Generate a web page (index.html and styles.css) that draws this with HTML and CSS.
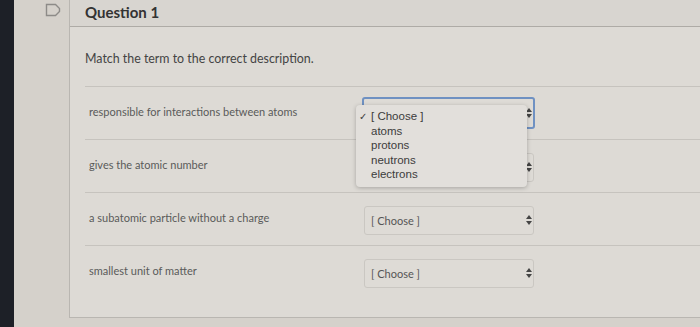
FILE: index.html
```html
<!DOCTYPE html>
<html lang="en">
<head>
    <meta charset="UTF-8">
    <title>Question 1</title>
    <link rel="stylesheet" href="styles.css">
</head>
<body>
    <div class="screen-edge"></div>
    <div class="gutter">
        <svg class="flag" width="16" height="14" viewBox="0 0 16 14">
            <path d="M1.5 1.5 H10.5 L14.5 5.5 V8.5 L10.5 12.5 H1.5 Z" fill="none" stroke="#8d8b88" stroke-width="1.4"/>
        </svg>
    </div>
    <div class="question">
        <div class="question-header">Question 1</div>
        <div class="question-body">
            <p class="question-text">Match the term to the correct description.</p>
            <div class="answers">
                <div class="answer-row">
                    <div class="answer-label">responsible for interactions between atoms</div>
                    <div class="select focused">
                        <span class="arrows">
                            <svg width="6" height="10" viewBox="0 0 6 10"><path d="M3 0 L6 4 H0 Z M3 10 L6 6 H0 Z" fill="#444"/></svg>
                        </span>
                    </div>
                    <div class="dropdown">
                        <div class="option checked"><span class="check">✓</span>[ Choose ]</div>
                        <div class="option">atoms</div>
                        <div class="option">protons</div>
                        <div class="option">neutrons</div>
                        <div class="option">electrons</div>
                    </div>
                </div>
                <div class="answer-row">
                    <div class="answer-label">gives the atomic number</div>
                    <div class="select">
                        <span class="arrows">
                            <svg width="6" height="10" viewBox="0 0 6 10"><path d="M3 0 L6 4 H0 Z M3 10 L6 6 H0 Z" fill="#444"/></svg>
                        </span>
                    </div>
                </div>
                <div class="answer-row">
                    <div class="answer-label">a subatomic particle without a charge</div>
                    <div class="select">
                        <span class="value">[ Choose ]</span>
                        <span class="arrows">
                            <svg width="6" height="10" viewBox="0 0 6 10"><path d="M3 0 L6 4 H0 Z M3 10 L6 6 H0 Z" fill="#444"/></svg>
                        </span>
                    </div>
                </div>
                <div class="answer-row">
                    <div class="answer-label">smallest unit of matter</div>
                    <div class="select">
                        <span class="value">[ Choose ]</span>
                        <span class="arrows">
                            <svg width="6" height="10" viewBox="0 0 6 10"><path d="M3 0 L6 4 H0 Z M3 10 L6 6 H0 Z" fill="#444"/></svg>
                        </span>
                    </div>
                </div>
            </div>
        </div>
    </div>
</body>
</html>
```

FILE: styles.css
```css
body {
    margin: 0;
    height: 327px;
    display: flex;
    align-items: flex-start;
    background-color: #d5d1cb;
    font-family: Lato, "Open Sans", sans-serif;
    color: #3b3b3b;
    overflow: hidden;
}
.screen-edge {
    width: 14px;
    height: 327px;
    background-color: #1d2027;
}
.gutter {
    width: 55px;
    padding-top: 3px;
    display: flex;
    justify-content: flex-end;
}
.flag {
    margin-right: 8px;
}
.question {
    flex: 1;
    height: 318px;
    border-left: 1px solid #b9b6b1;
    border-bottom: 1px solid #b9b6b1;
    background-color: #dddad5;
    box-sizing: border-box;
}
.question-header {
    height: 27px;
    box-sizing: border-box;
    padding: 3px 0 0 15px;
    border-bottom: 1px solid #aeaba6;
    background-color: #d8d5d0;
    font-size: 15px;
    font-weight: bold;
    color: #333;
}
.question-body {
    padding-left: 15px;
}
.question-text {
    margin: 0;
    padding: 24px 0 0 0;
    height: 35px;
    font-size: 12.4px;
    color: #444;
}
.answer-row {
    position: relative;
    height: 53px;
    border-top: 1px solid #c6c3be;
    display: flex;
    align-items: center;
    box-sizing: border-box;
}
.answer-label {
    width: 275px;
    padding-left: 4px;
    padding-bottom: 4px;
    font-size: 11px;
    color: #5a5a5a;
}
.select {
    width: 170px;
    height: 29px;
    margin-top: 2px;
    box-sizing: border-box;
    border: 1px solid #cac7c2;
    border-radius: 3px;
    background-color: #dedbd6;
    display: flex;
    align-items: center;
    justify-content: space-between;
    padding: 0 1px 0 6px;
}
.select.focused {
    height: 32px;
    margin-top: 0;
    margin-left: -2px;
    width: 173px;
    border: 2px solid #6f91c2;
}
.value {
    font-size: 11px;
    color: #555;
}
.arrows {
    display: flex;
    margin-left: auto;
}
.dropdown {
    position: absolute;
    left: 271px;
    top: 18px;
    width: 171px;
    height: 82px;
    box-sizing: border-box;
    padding: 4px 0 0 3px;
    background-color: #e2dfdb;
    border-radius: 4px;
    box-shadow: 0 1px 4px rgba(0, 0, 0, 0.25);
    font-family: "Liberation Sans", Arial, sans-serif;
    font-size: 11.5px;
    color: #3c3c3c;
    z-index: 2;
}
.option {
    height: 14.5px;
    line-height: 14.5px;
    padding-left: 12px;
}
.option.checked {
    padding-left: 0;
}
.check {
    display: inline-block;
    width: 12px;
    font-size: 10px;
}
```
